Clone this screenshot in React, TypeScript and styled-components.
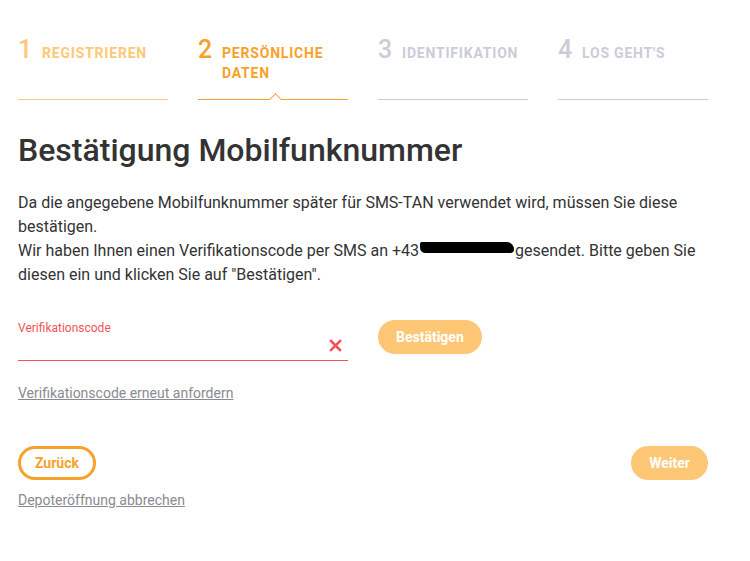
import React, { useState } from 'react';
import styled, { createGlobalStyle } from 'styled-components';

const GlobalStyle = createGlobalStyle`
    body {
        margin: 0;
        background: #fff;
        font-family: Roboto, "Liberation Sans", sans-serif;
        color: #333;
    }
`;

const Page = styled.main`
    padding: 0 42px 0 18px;
`;

const Steps = styled.nav`
    display: grid;
    grid-template-columns: repeat(4, 150px);
    column-gap: 30px;
    padding-top: 36px;
`;

type StepState = 'done' | 'active' | 'todo';

const stepColor = (state: StepState) =>
    state === 'done' ? '#fdc878' : state === 'active' ? '#f8a12a' : '#ccccd6';

const Step = styled.div<{ $state: StepState }>`
    position: relative;
    display: flex;
    align-items: flex-start;
    height: 63px;
    border-bottom: 1px solid ${(p) => stepColor(p.$state)};
    color: ${(p) => stepColor(p.$state)};
`;

const StepNumber = styled.span`
    font-size: 25px;
    font-weight: 500;
    line-height: 28px;
    width: 24px;
    flex: none;
`;

const StepLabel = styled.span`
    font-size: 14px;
    font-weight: 700;
    letter-spacing: 0.8px;
    line-height: 20px;
    padding-top: 7px;
    text-transform: uppercase;
`;

const Caret = styled.span`
    position: absolute;
    left: 73px;
    bottom: -5px;
    width: 8px;
    height: 8px;
    background: #fff;
    border-top: 1px solid #f8a12a;
    border-left: 1px solid #f8a12a;
    transform: rotate(45deg);
`;

const Title = styled.h1`
    margin: 31px 0 0;
    font-size: 32px;
    font-weight: 500;
    line-height: 38px;
    color: #333;
`;

const Text = styled.p`
    margin: 22px 0 0;
    font-size: 16px;
    line-height: 24px;
    color: #333;
    max-width: 700px;
`;

const Redacted = styled.span`
    display: inline-block;
    width: 94px;
    height: 11px;
    margin-left: 1px;
    margin-right: 1px;
    background: #000;
    border-radius: 2px 8px 4px 6px;
    vertical-align: 3px;
`;

const CodeRow = styled.div`
    display: flex;
    align-items: flex-start;
    gap: 30px;
    margin-top: 33px;
`;

const Field = styled.label`
    position: relative;
    display: block;
    width: 330px;
    border-bottom: 1px solid #f2535b;
`;

const FieldLabel = styled.span`
    display: block;
    padding-top: 1px;
    font-size: 12px;
    line-height: 14px;
    color: #f2535b;
`;

const Input = styled.input`
    display: block;
    width: 100%;
    height: 25px;
    border: none;
    outline: none;
    padding: 0;
    font: inherit;
    font-size: 16px;
    background: none;
`;

const ClearIcon = styled.svg`
    position: absolute;
    right: 6px;
    bottom: 8px;
`;

const Button = styled.button<{ $outline?: boolean }>`
    height: 34px;
    padding: 0 ${(p) => (p.$outline ? '14px' : '18px')};
    border-radius: 17px;
    font-family: Roboto, "Liberation Sans", sans-serif;
    font-size: 14px;
    font-weight: 700;
    cursor: pointer;
    border: ${(p) => (p.$outline ? '3px solid #f8a12a' : 'none')};
    background: ${(p) => (p.$outline ? '#fff' : '#fdc776')};
    color: ${(p) => (p.$outline ? '#f8a12a' : '#fff')};
`;

const TextLink = styled.a`
    display: inline-block;
    font-size: 14px;
    line-height: 16px;
    color: #8a8a92;
    text-decoration: underline;
    cursor: pointer;
`;

const ResendLink = styled(TextLink)`
    margin-top: 24px;
`;

const Actions = styled.div`
    display: flex;
    justify-content: space-between;
    margin-top: 44px;
`;

const CancelLink = styled(TextLink)`
    margin-top: 12px;
`;

const steps: { n: number; label: string; state: StepState }[] = [
    { n: 1, label: 'Registrieren', state: 'done' },
    { n: 2, label: 'Persönliche Daten', state: 'active' },
    { n: 3, label: 'Identifikation', state: 'todo' },
    { n: 4, label: "Los geht's", state: 'todo' },
];

const App = () => {
    const [code, setCode] = useState('');

    return (
        <Page>
            <GlobalStyle />
            <Steps>
                {steps.map((s) => (
                    <Step key={s.n} $state={s.state}>
                        <StepNumber>{s.n}</StepNumber>
                        <StepLabel>{s.label}</StepLabel>
                        {s.state === 'active' && <Caret />}
                    </Step>
                ))}
            </Steps>

            <Title>Bestätigung Mobilfunknummer</Title>
            <Text>
                Da die angegebene Mobilfunknummer später für SMS-TAN verwendet wird, müssen Sie diese bestätigen.
                <br />
                Wir haben Ihnen einen Verifikationscode per SMS an +43<Redacted />gesendet. Bitte geben Sie
                diesen ein und klicken Sie auf "Bestätigen".
            </Text>

            <CodeRow>
                <Field>
                    <FieldLabel>Verifikationscode</FieldLabel>
                    <Input value={code} onChange={(e) => setCode(e.target.value)} />
                    <ClearIcon width="13" height="13" viewBox="0 0 13 13">
                        <path d="M2 2 L11 11 M11 2 L2 11" stroke="#f2535b" strokeWidth="2.6" strokeLinecap="square" />
                    </ClearIcon>
                </Field>
                <Button>Bestätigen</Button>
            </CodeRow>

            <ResendLink>Verifikationscode erneut anfordern</ResendLink>

            <Actions>
                <Button $outline>Zurück</Button>
                <Button>Weiter</Button>
            </Actions>
            <CancelLink>Depoteröffnung abbrechen</CancelLink>
        </Page>
    );
};

export default App;
